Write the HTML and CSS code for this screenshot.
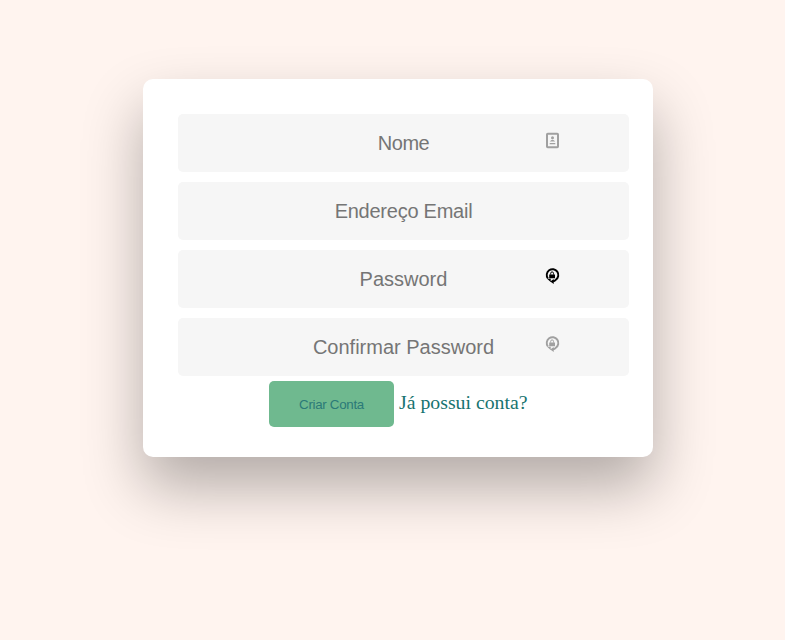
FILE: index.html
```html
<!DOCTYPE html>
<html lang="pt">
<head>
<meta charset="utf-8">
<title>Criar Conta</title>
<link rel="stylesheet" href="styles.css">
</head>
<body>
<form class="card">
  <div class="field"><input class="name" type="text" placeholder="Nome">
    <svg class="icon" viewBox="0 0 16 18"><rect x="2" y="2.8" width="11" height="13.4" rx=".7" fill="#f6f6f6" stroke="currentColor" stroke-width="2"/><circle cx="7.5" cy="6.8" r="1.5" fill="currentColor"/><path d="M4.8 10.5q2.7-3.4 5.4 0zM4.7 12h5.6v1.2H4.7z" fill="currentColor"/></svg></div>
  <div class="field"><input class="email" type="email" placeholder="Endereço Email"></div>
  <div class="field"><input type="password" placeholder="Password">
    <svg class="icon dark" viewBox="0 0 16 18"><path d="M2.9 11.5A5.8 5.8 0 1 1 10.8 12.8Q9.6 14 8 14.3" fill="none" stroke="currentColor" stroke-width="1.9"/><path d="M2 11.7h3.7v3.4zM8.7 12.1v5l-3.4-2.5zM4.2 7.4h5.8v3.8H4.2z" fill="currentColor"/><path d="M5.7 7.6V6.3a1.4 1.4 0 0 1 2.8 0v1.3" fill="none" stroke="currentColor"/></svg></div>
  <div class="field"><input type="password" placeholder="Confirmar Password">
    <svg class="icon" viewBox="0 0 16 18"><path d="M2.9 11.5A5.8 5.8 0 1 1 10.8 12.8Q9.6 14 8 14.3" fill="none" stroke="currentColor" stroke-width="1.9"/><path d="M2 11.7h3.7v3.4zM8.7 12.1v5l-3.4-2.5zM4.2 7.4h5.8v3.8H4.2z" fill="currentColor"/><path d="M5.7 7.6V6.3a1.4 1.4 0 0 1 2.8 0v1.3" fill="none" stroke="currentColor"/></svg></div>
  <div class="actions"><button type="button">Criar Conta</button><a>Já possui conta?</a></div>
</form>
</body>
</html>
```
FILE: styles.css
```css
* { box-sizing: border-box; }
html { background: #fff4ef; }
body { margin: 0; min-height: 100vh; padding: 79px 0 0 143px; background: #fff4ef; }
.card { width: 510px; height: 378px; padding: 35px 24px 30px 35px; background: #fff; border-radius: 10px; box-shadow: 0 30px 60px 0 rgba(0,0,0,.3); }
.field { position: relative; height: 58px; margin-bottom: 10px; }
.field input { display: block; width: 451px; height: 58px; padding: 0; border: 0; border-radius: 5px; background: #f6f6f6; text-align: center; font: 20px "Liberation Sans", Arial, sans-serif; }
.field input::placeholder { color: #757575; }
.field .name { letter-spacing: -.5px; }
.field .email { letter-spacing: -.25px; }
.icon { position: absolute; left: 367px; top: 17px; width: 16px; height: 18px; color: #a0a0a0; }
.dark { color: #000; }
.actions { display: flex; gap: 5px; margin: -5px 0 0 91px; }
button { width: 125px; height: 46px; padding: 0; border: 0; border-radius: 5px; background: #6fb98f; color: #2b7a78; font: 13.333px "Liberation Sans", Arial, sans-serif; letter-spacing: -.3px; }
a { color: #17736f; font: 19.8px/42px "Liberation Serif", serif; white-space: nowrap; }
```
